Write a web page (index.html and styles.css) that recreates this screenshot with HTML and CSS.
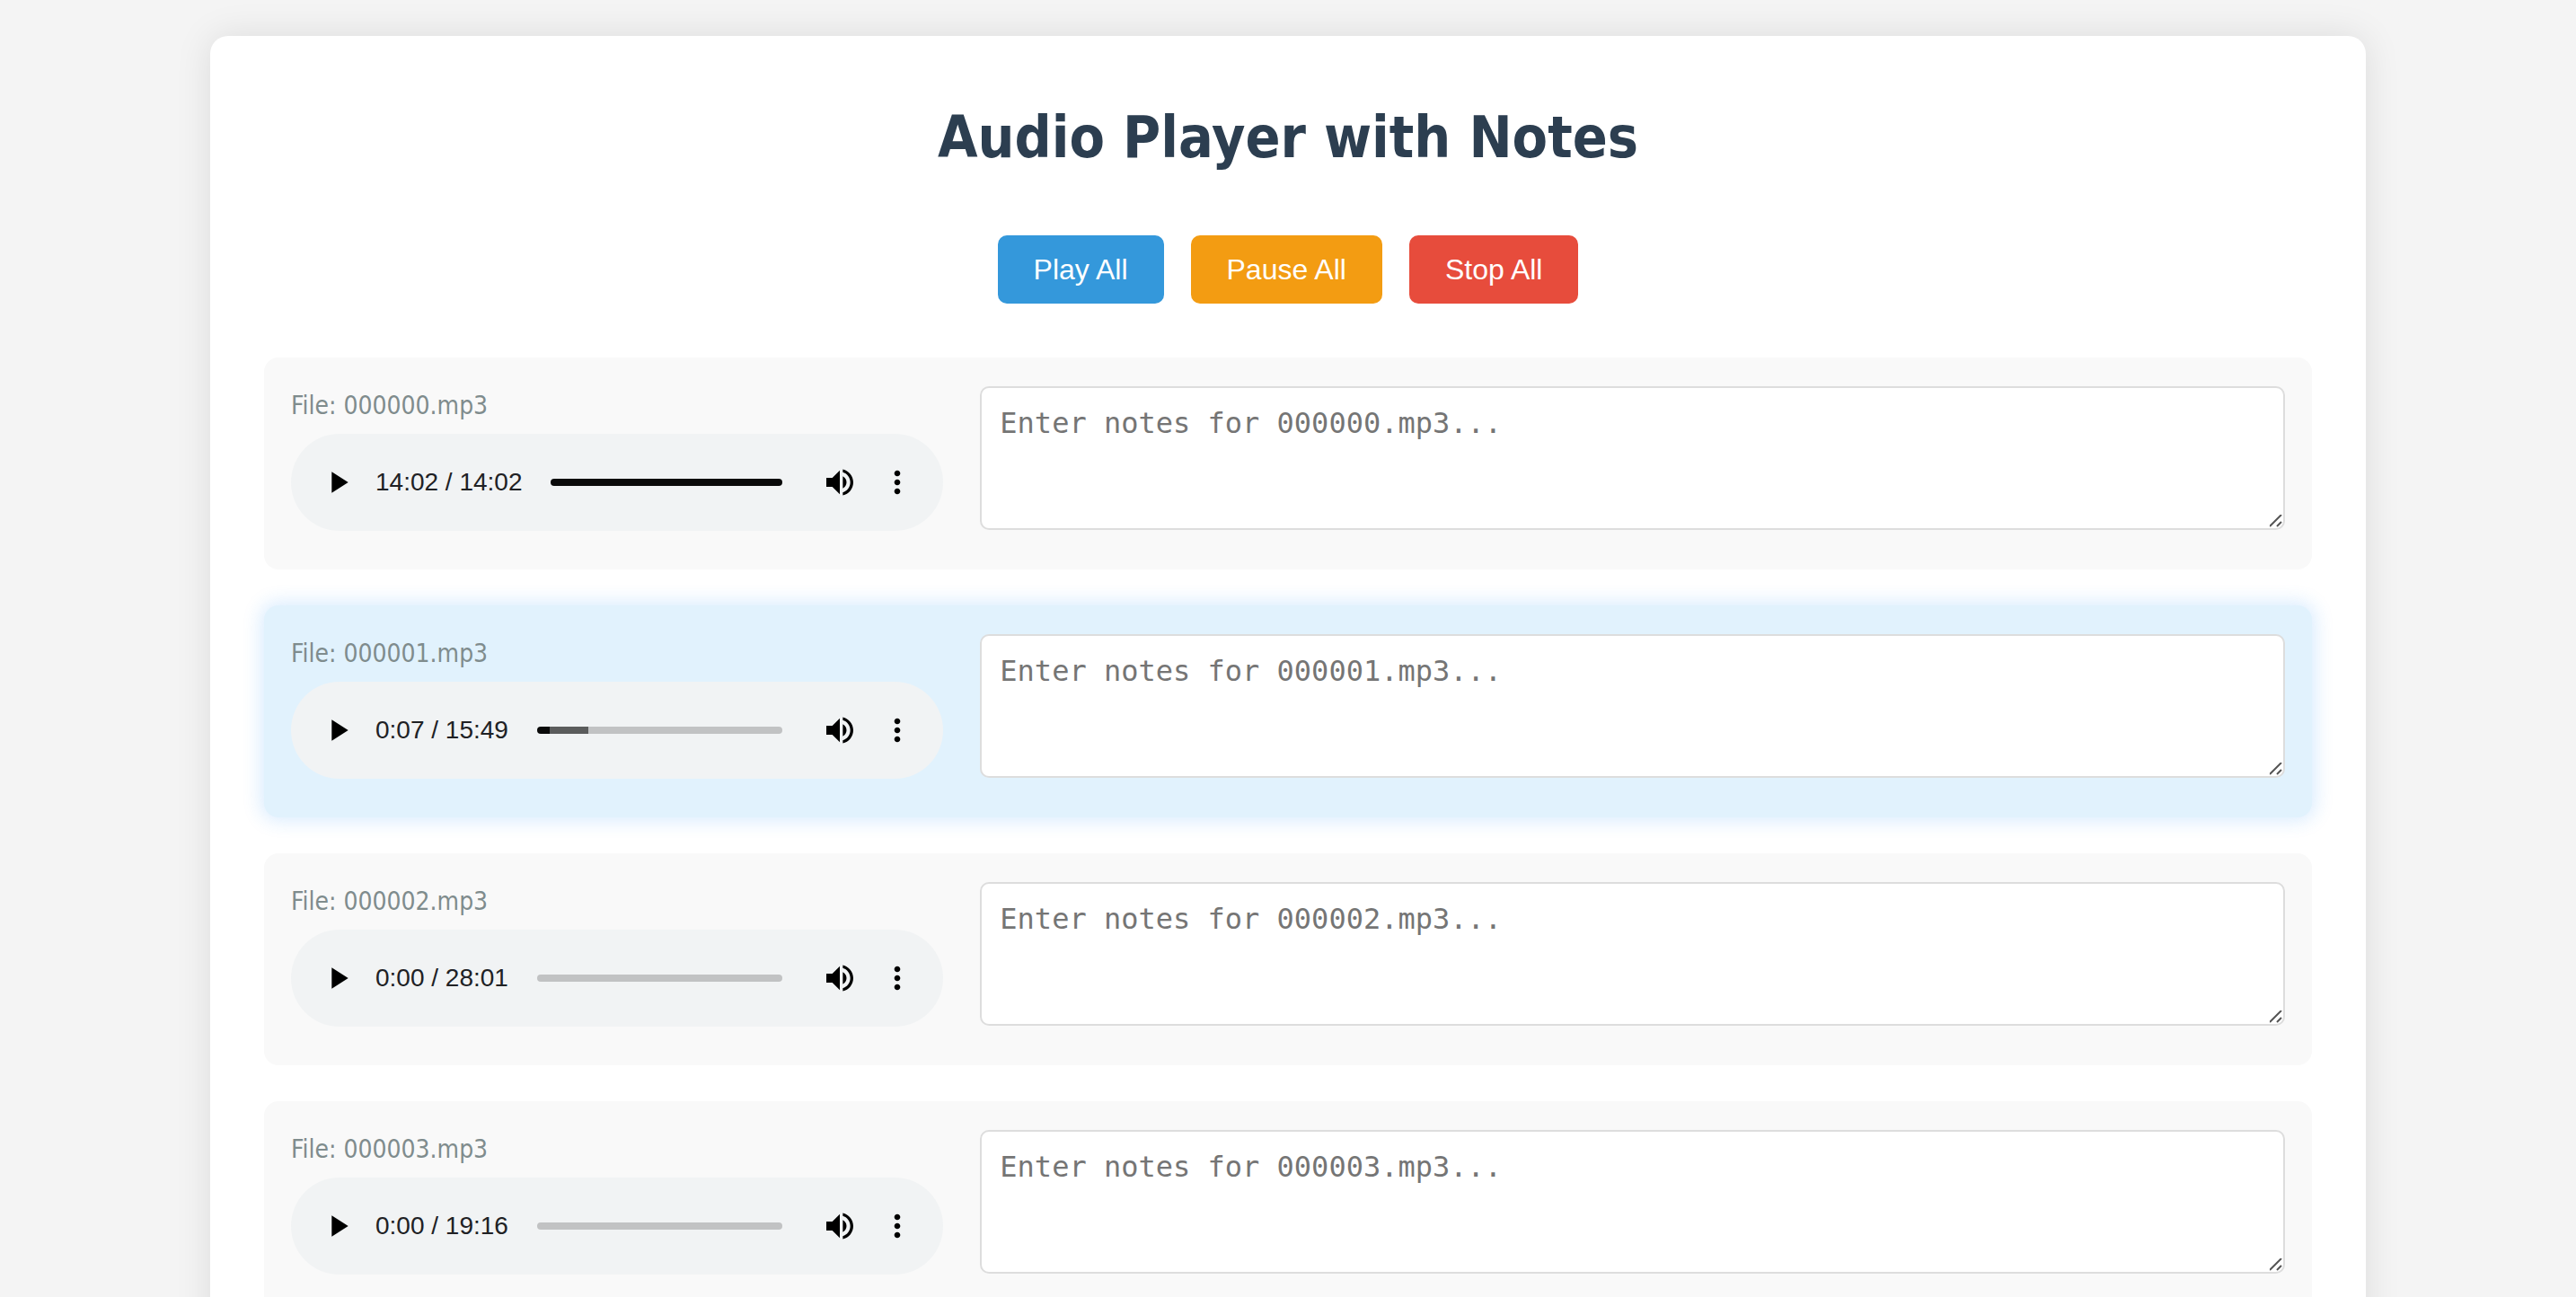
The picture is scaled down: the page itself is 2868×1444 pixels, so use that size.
FILE: index.html
```html
<!DOCTYPE html>
<html lang="en">
<head>
<meta charset="utf-8">
<title>Audio Player with Notes</title>
<link rel="stylesheet" href="styles.css">
</head>
<body>
<svg class="sprite" aria-hidden="true">
  <symbol id="play" viewBox="0 0 24 24"><path d="M8 5v14l11-7z"/></symbol>
  <symbol id="volume" viewBox="0 0 24 24"><path d="M3 9v6h4l5 5V4L7 9H3zm13.5 3c0-1.77-1.02-3.29-2.5-4.03v8.05c1.48-.73 2.5-2.25 2.5-4.02zM14 3.23v2.06c2.89.86 5 3.54 5 6.71s-2.11 5.85-5 6.71v2.06c4.01-.91 7-4.49 7-8.77s-2.99-7.86-7-8.77z"/></symbol>
  <symbol id="more" viewBox="0 0 24 24"><path d="M12 8c1.1 0 2-.9 2-2s-.9-2-2-2-2 .9-2 2 .9 2 2 2zm0 2c-1.1 0-2 .9-2 2s.9 2 2 2 2-.9 2-2-.9-2-2-2zm0 6c-1.1 0-2 .9-2 2s.9 2 2 2 2-.9 2-2-.9-2-2-2z"/></symbol>
</svg>
<main class="container">
  <h1 class="title">Audio Player with Notes</h1>
  <div class="controls">
    <button type="button" class="btn btn-play">Play All</button>
    <button type="button" class="btn btn-pause">Pause All</button>
    <button type="button" class="btn btn-stop">Stop All</button>
  </div>
  <section class="item">
    <div class="audio">
      <label class="file" for="notes-0">File: 000000.mp3</label>
      <div class="player">
        <button type="button" class="icon-btn" aria-label="Play"><svg><use href="#play"/></svg></button>
        <span class="time">14:02 / 14:02</span>
        <input type="range" class="track" aria-label="Seek" min="0" max="842" value="842" style="--played: 100%; --buffered: 100%">
        <button type="button" class="icon-btn" aria-label="Mute"><svg><use href="#volume"/></svg></button>
        <button type="button" class="icon-btn menu" aria-label="More options"><svg><use href="#more"/></svg></button>
      </div>
    </div>
    <textarea class="notes" id="notes-0" placeholder="Enter notes for 000000.mp3..."></textarea>
  </section>
  <section class="item active">
    <div class="audio">
      <label class="file" for="notes-1">File: 000001.mp3</label>
      <div class="player">
        <button type="button" class="icon-btn" aria-label="Play"><svg><use href="#play"/></svg></button>
        <span class="time">0:07 / 15:49</span>
        <input type="range" class="track" aria-label="Seek" min="0" max="949" value="7" style="--played: 5%; --buffered: 21%">
        <button type="button" class="icon-btn" aria-label="Mute"><svg><use href="#volume"/></svg></button>
        <button type="button" class="icon-btn menu" aria-label="More options"><svg><use href="#more"/></svg></button>
      </div>
    </div>
    <textarea class="notes" id="notes-1" placeholder="Enter notes for 000001.mp3..."></textarea>
  </section>
  <section class="item">
    <div class="audio">
      <label class="file" for="notes-2">File: 000002.mp3</label>
      <div class="player">
        <button type="button" class="icon-btn" aria-label="Play"><svg><use href="#play"/></svg></button>
        <span class="time">0:00 / 28:01</span>
        <input type="range" class="track" aria-label="Seek" min="0" max="1681" value="0">
        <button type="button" class="icon-btn" aria-label="Mute"><svg><use href="#volume"/></svg></button>
        <button type="button" class="icon-btn menu" aria-label="More options"><svg><use href="#more"/></svg></button>
      </div>
    </div>
    <textarea class="notes" id="notes-2" placeholder="Enter notes for 000002.mp3..."></textarea>
  </section>
  <section class="item">
    <div class="audio">
      <label class="file" for="notes-3">File: 000003.mp3</label>
      <div class="player">
        <button type="button" class="icon-btn" aria-label="Play"><svg><use href="#play"/></svg></button>
        <span class="time">0:00 / 19:16</span>
        <input type="range" class="track" aria-label="Seek" min="0" max="1156" value="0">
        <button type="button" class="icon-btn" aria-label="Mute"><svg><use href="#volume"/></svg></button>
        <button type="button" class="icon-btn menu" aria-label="More options"><svg><use href="#more"/></svg></button>
      </div>
    </div>
    <textarea class="notes" id="notes-3" placeholder="Enter notes for 000003.mp3..."></textarea>
  </section>
</main>
</body>
</html>
```
FILE: styles.css
```css
* {
  box-sizing: border-box;
}

html {
  scrollbar-width: none;
}

body {
  margin: 0;
  padding: 40px;
  background: #f4f4f4;
  color: #333;
  font-family: "DejaVu Sans Condensed", "DejaVu Sans", sans-serif;
}

.sprite {
  display: none;
}

.container {
  max-width: 2400px;
  margin: 0 auto;
  padding: 60px;
  background: #fff;
  border-radius: 20px;
  box-shadow: 0 0 40px rgba(0, 0, 0, 0.1);
}

.title {
  margin: 0 0 56px;
  color: #2c3e50;
  font-size: 64px;
  line-height: 106px;
  text-align: center;
}

.controls {
  display: flex;
  justify-content: center;
  gap: 30px;
  margin-bottom: 60px;
}

.btn {
  padding: 20px 40px;
  border: 0;
  border-radius: 10px;
  color: #fff;
  font: 32px/36px "Liberation Sans", sans-serif;
  cursor: pointer;
}

.btn-play {
  background: #3498db;
}

.btn-pause {
  background: #f39c12;
}

.btn-stop {
  background: #e74c3c;
}

.item {
  display: grid;
  grid-template-columns: 1fr 2fr;
  gap: 41px;
  margin-bottom: 40px;
  padding: 32px 30px 43px;
  background: #f9f9f9;
  border-radius: 16px;
}

.item.active {
  background: #e1f2fd;
  box-shadow: 0 0 20px 4px rgba(33, 140, 250, 0.17);
}

.file {
  display: block;
  margin-bottom: 10px;
  color: #7f8c8d;
  font-size: 28px;
  line-height: 43px;
}

.player {
  display: flex;
  align-items: center;
  height: 108px;
  padding: 0 31px 0 32px;
  background: #f1f3f4;
  border-radius: 54px;
}

.icon-btn {
  flex: none;
  padding: 0;
  border: 0;
  background: none;
  cursor: pointer;
}

.icon-btn svg {
  display: block;
  width: 40px;
  height: 40px;
}

.menu {
  margin-left: 24px;
}

.time {
  margin: 0 32px 0 22px;
  color: #202124;
  font: 28px/32px "Liberation Sans", sans-serif;
  white-space: nowrap;
}

.track {
  flex: 1;
  min-width: 0;
  height: 8px;
  margin: 0 44px 0 0;
  border-radius: 4px;
  appearance: none;
  background: linear-gradient(to right, #0a0a0a var(--played, 0%), #5b5c5c var(--played, 0%), #5b5c5c var(--buffered, 0%), #c1c2c3 var(--buffered, 0%));
}

.track::-webkit-slider-thumb {
  width: 8px;
  height: 8px;
  appearance: none;
  opacity: 0;
}

.notes {
  width: 100%;
  height: 160px;
  padding: 20px;
  border: 2px solid #ddd;
  border-radius: 10px;
  background: #fff;
  font: 32px/38px "DejaVu Sans Mono", monospace;
  resize: vertical;
}

.notes::placeholder {
  color: #757575;
}

.notes::-webkit-resizer {
  background: url("data:image/svg+xml,%3Csvg xmlns='http://www.w3.org/2000/svg' width='15' height='15'%3E%3Cpath d='M0 13L13 0M8 13l5-5' stroke='%23555' stroke-width='2'/%3E%3C/svg%3E") no-repeat;
}
```
